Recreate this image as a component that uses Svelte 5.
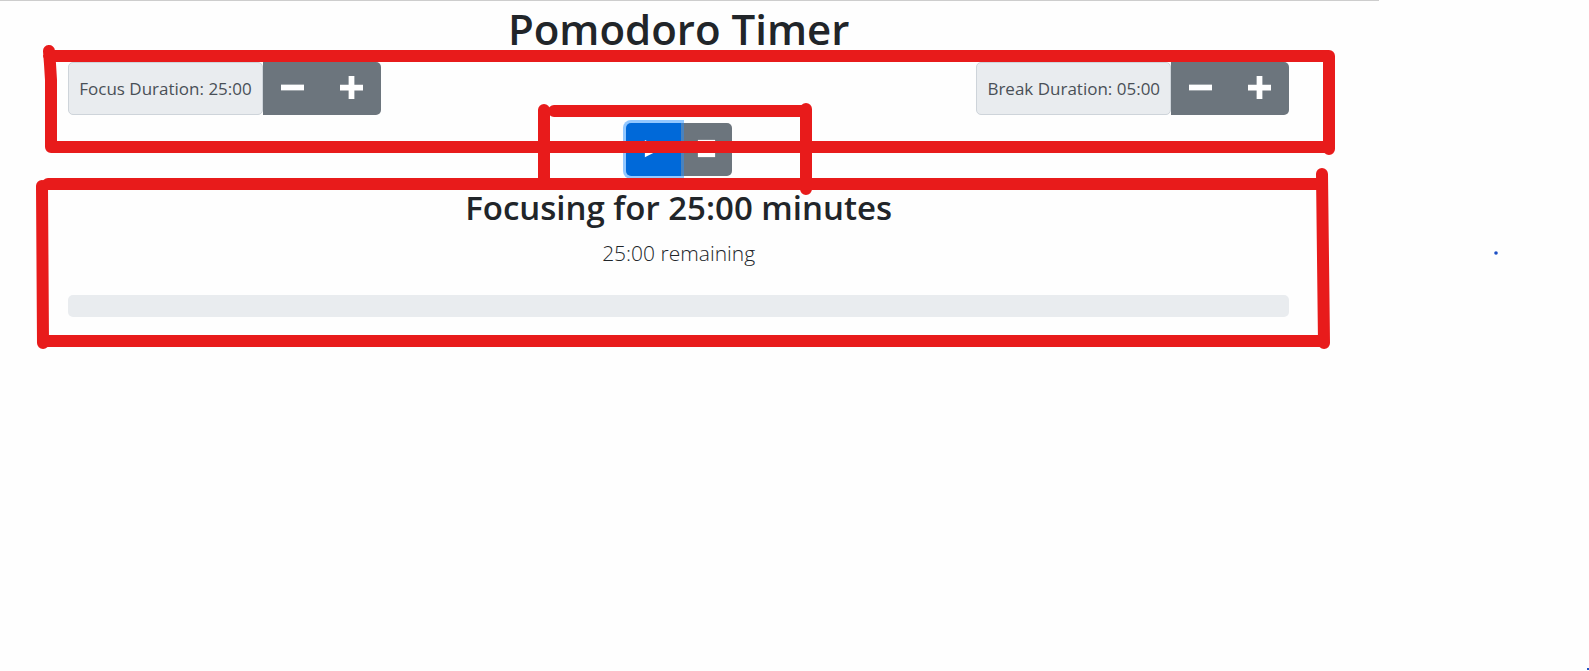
<script lang="ts">
  let focusMinutes = $state(25);
  let breakMinutes = $state(5);
  const clock = (m: number) => `${String(m).padStart(2, '0')}:00`;
</script>

<div class="page">
  <main class="container">
    <h1>Pomodoro Timer</h1>
    <div class="settings">
      <div class="group" role="group" aria-label="Focus duration">
        <span class="label">Focus Duration: {clock(focusMinutes)}</span>
        <button type="button" aria-label="Decrease focus duration" onclick={() => (focusMinutes = Math.max(5, focusMinutes - 5))}>
          <svg class="icon" viewBox="0 0 8 8"><path d="M0 3v2h8v-2z" /></svg>
        </button>
        <button type="button" aria-label="Increase focus duration" onclick={() => (focusMinutes = Math.min(60, focusMinutes + 5))}>
          <svg class="icon" viewBox="0 0 8 8"><path d="M3 0v3h-3v2h3v3h2v-3h3v-2h-3v-3z" /></svg>
        </button>
      </div>
      <div class="group" role="group" aria-label="Break duration">
        <span class="label">Break Duration: {clock(breakMinutes)}</span>
        <button type="button" aria-label="Decrease break duration" onclick={() => (breakMinutes = Math.max(1, breakMinutes - 1))}>
          <svg class="icon" viewBox="0 0 8 8"><path d="M0 3v2h8v-2z" /></svg>
        </button>
        <button type="button" aria-label="Increase break duration" onclick={() => (breakMinutes = Math.min(15, breakMinutes + 1))}>
          <svg class="icon" viewBox="0 0 8 8"><path d="M3 0v3h-3v2h3v3h2v-3h3v-2h-3v-3z" /></svg>
        </button>
      </div>
    </div>

    <div class="group controls" role="group" aria-label="Timer controls">
      <button type="button" class="play" aria-label="Start timer">
        <svg class="icon" viewBox="0 0 8 8"><path d="M1 1v6l6-3z" /></svg>
      </button>
      <button type="button" class="stop" aria-label="Stop timer">
        <svg class="icon" viewBox="0 0 8 8"><path d="M1 1v6h6v-6z" /></svg>
      </button>
    </div>

    <section class="session">
      <h2>Focusing for {clock(focusMinutes)} minutes</h2>
      <p>{clock(focusMinutes)} remaining</p>
      <div class="progress" role="progressbar" aria-label="Session progress" aria-valuemin="0" aria-valuemax="100" aria-valuenow="0"></div>
    </section>
  </main>
</div>

<!-- Freehand pen marks over the page -->
<svg class="ink" viewBox="0 0 1589 671" aria-hidden="true">
  <g class="pen">
    <path d="M49 51L50 64L51 80L51 147H1328M49 56H1329V149" />
    <path d="M544 110V184M554 111H804M806 109V189" />
    <path d="M48 184H1320M42 186L43 343M48 341H1323M1322 174L1324 343" />
  </g>
  <circle cx="1496" cy="253" r="1.8" />
  <path class="dot" d="M1587 668h2v2h-2z" />
</svg>

<style>
  :global(body) {
    margin: 0;
    background: #fefefe;
    color: #212529;
    font-family: "Open Sans", "Noto Sans", sans-serif;
  }
  .page {
    width: 86.8%;
    border-top: 1px solid #cdcdcd;
    box-sizing: border-box;
  }
  .container {
    display: flex;
    flex-direction: column;
    align-items: center;
    margin-left: 68px;
    margin-right: 90px;
  }
  h1, h2, p { margin: 0; }
  h1 {
    font-size: 42px;
    line-height: 52px;
    font-weight: 600;
    margin-top: 2px;
    margin-bottom: 7px;
  }
  .settings {
    align-self: stretch;
    display: flex;
    flex-wrap: wrap;
    justify-content: space-between;
    gap: 8px;
  }
  .group {
    display: flex;
    height: 53px;
  }
  .label {
    display: flex;
    align-items: center;
    justify-content: center;
    box-sizing: border-box;
    min-width: 195px;
    padding: 0 10px;
    border: 1px solid #ced4da;
    border-radius: 5px;
    background: #e9ecef;
    color: #495057;
    font-size: 17px;
    white-space: nowrap;
  }
  button {
    display: flex;
    align-items: center;
    justify-content: center;
    width: 59px;
    padding: 0 0 3px;
    border: 0;
    background: #6c757d;
    cursor: pointer;
  }
  button:last-child { border-radius: 0 5px 5px 0; }
  .icon {
    display: block;
    width: 23px;
    height: 23px;
    fill: #fff;
  }
  .controls { margin-top: 8px; }
  .play {
    position: relative;
    width: 55px;
    border-radius: 5px 0 0 5px;
    background: #0069d9;
    box-shadow: 0 0 0 3px rgba(38, 143, 255, 0.5);
  }
  .stop { width: 51px; }
  .session {
    align-self: stretch;
    text-align: center;
  }
  h2 {
    font-size: 33px;
    line-height: 42px;
    font-weight: 600;
    margin-top: 11px;
  }
  p {
    font-size: 21px;
    line-height: 32px;
    font-weight: 300;
    margin-top: 8px;
  }
  .progress {
    height: 22px;
    margin-top: 26px;
    border-radius: 5px;
    background: #e9ecef;
  }
  .ink {
    position: absolute;
    top: 0;
    left: 0;
    width: 100%;
    fill: #1c4fc4;
    pointer-events: none;
  }
  .pen {
    fill: none;
    stroke: #e81b1b;
    stroke-width: 12;
    stroke-linecap: round;
    stroke-linejoin: round;
  }
</style>
